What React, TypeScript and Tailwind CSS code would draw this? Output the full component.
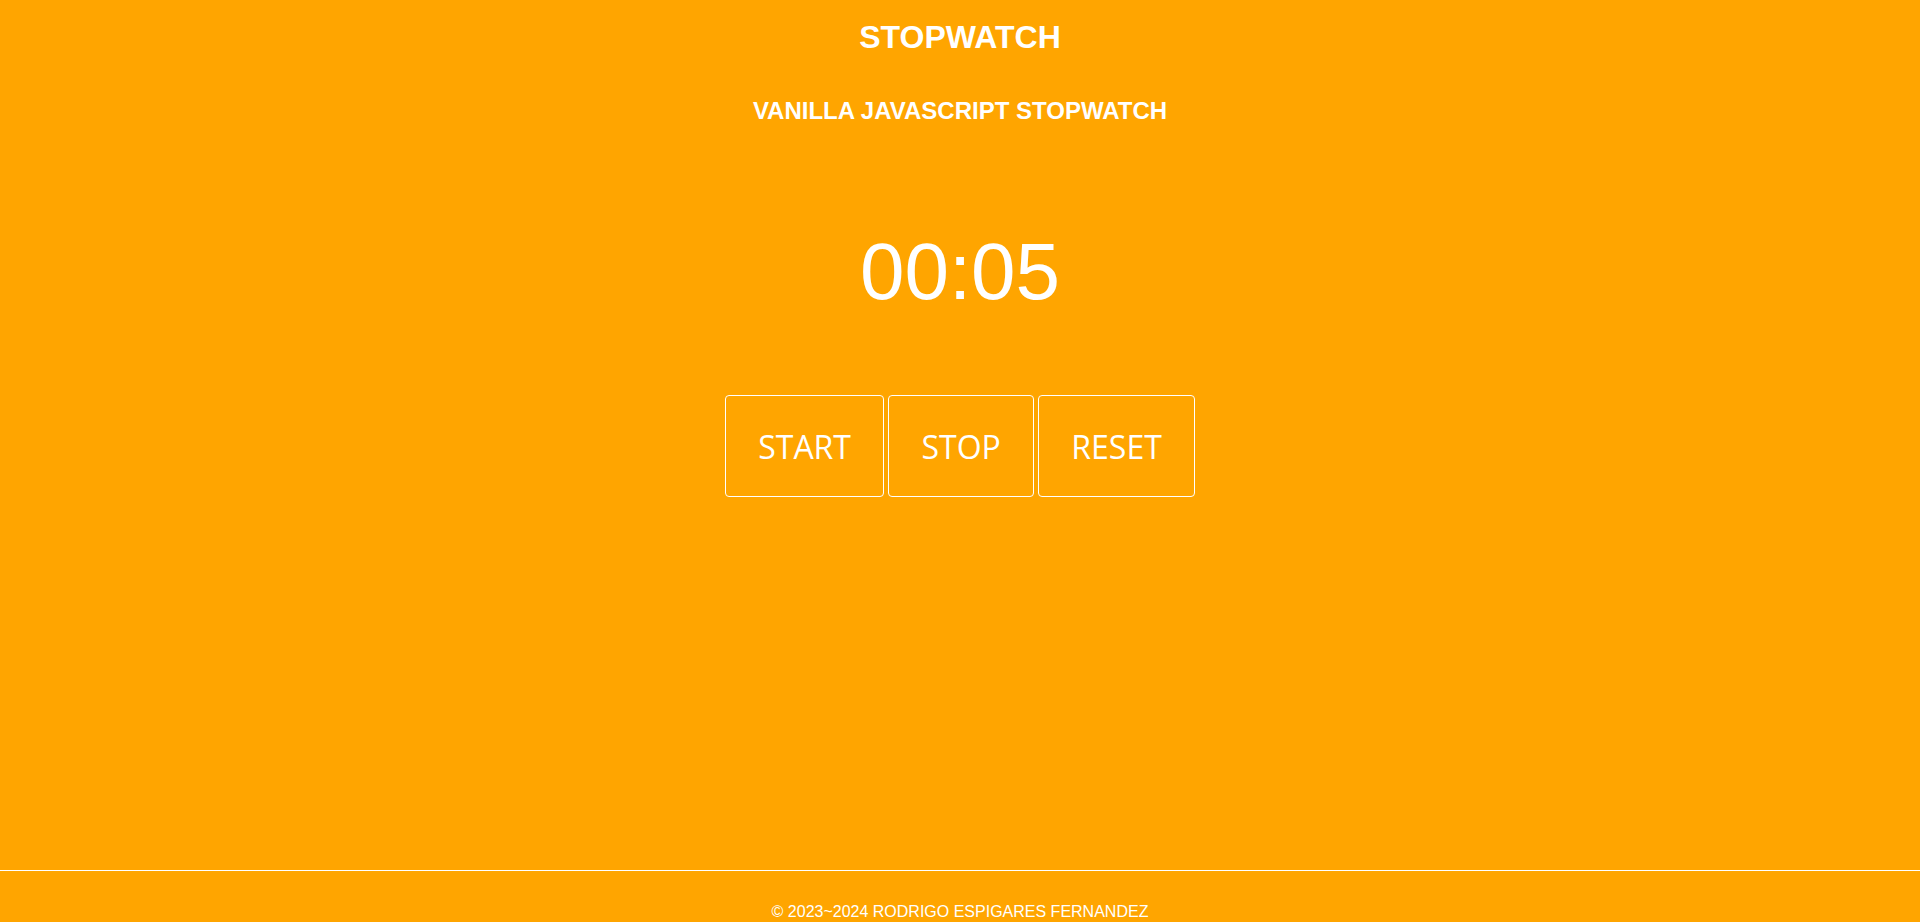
export default function App() {
  return (
    <div className="min-h-screen bg-[#ffa500] text-white flex flex-col font-['Liberation_Sans',Arial,sans-serif]">
      <main className="flex flex-col items-center">
        <h1 className="mt-[19px] text-[32px] leading-[37px] font-bold">STOPWATCH</h1>
        <h2 className="mt-[41px] text-[24px] leading-[28px] font-bold">VANILLA JAVASCRIPT STOPWATCH</h2>
        <div className="mt-[101px] text-[80px] leading-[92px]">00:05</div>
        <div className="mt-[77px] flex gap-[4.5px] font-['Open_Sans',sans-serif] text-[32px]">
          {["START", "STOP", "RESET"].map((label) => (
            <button
              key={label}
              className="h-[102px] px-[32px] pt-[2px] border border-white rounded-[4px] flex items-center justify-center"
            >
              {label}
            </button>
          ))}
        </div>
      </main>
      <footer className="mt-[373px] border-t border-white pt-[32px] pb-[20px] text-center text-[16px] leading-[18px]">
        © 2023~2024 RODRIGO ESPIGARES FERNANDEZ
      </footer>
    </div>
  );
}
